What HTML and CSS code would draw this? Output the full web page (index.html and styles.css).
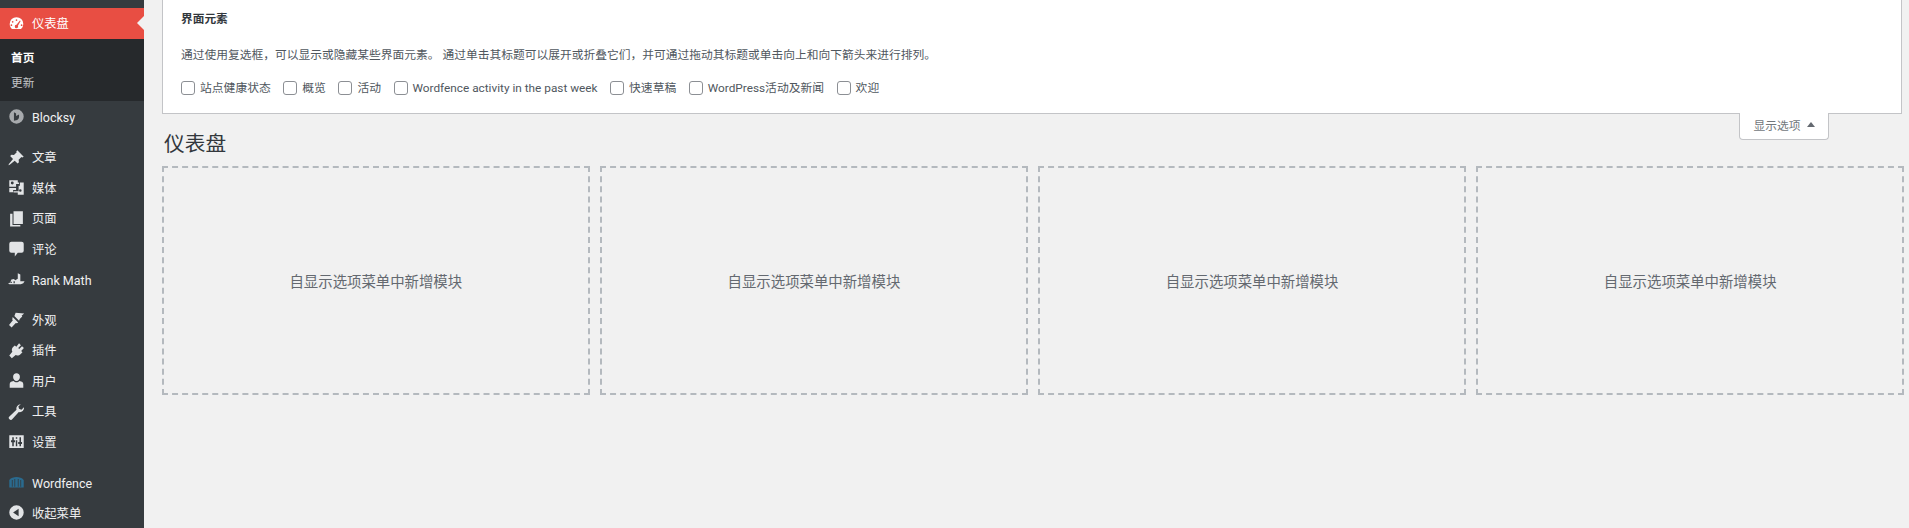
FILE: index.html
```html
<!DOCTYPE html>
<html lang="zh-CN">
<head>
  <meta charset="UTF-8" />
  <meta name="viewport" content="width=device-width, initial-scale=1.0" />
  <title>仪表盘</title>
  <link rel="stylesheet" href="styles.css">
</head>
<body>
  <!-- Admin menu -->
  <nav class="sidebar">
    <a class="menu-item active">
      <svg class="icon" viewBox="0 0 20 20"><path d="M10 2.500a8 8 0 0 0-8 8c0 2.400 1 4.600 2.700 6h10.600a8 8 0 0 0 2.700-6 8 8 0 0 0-8-8zM10 5a1 1 0 1 1 0 2 1 1 0 0 1 0-2zM5.500 7a1 1 0 1 1 0 2 1 1 0 0 1 0-2zM4 11a1 1 0 1 1 0 2 1 1 0 0 1 0-2zM16 11a1 1 0 1 1 0 2 1 1 0 0 1 0-2zM14 6.600l.900.600-3.200 5.300a2 2 0 1 1-1.700-1z" fill-rule="evenodd"/></svg>
      <span>仪表盘</span>
    </a>
    <div class="submenu">
      <a class="sub-item current">首页</a>
      <a class="sub-item">更新</a>
    </div>
    <a class="menu-item first-after-sub">
      <svg class="icon dim" viewBox="0 0 20 20"><path d="M10 1.500a8.500 8.500 0 1 0 0 17 8.500 8.500 0 0 0 0-17zM7 5l2.500 1.500v3L13 7.500v3.200a3.800 3.800 0 0 1-2.200 3.300L7 15z" fill-rule="evenodd"/></svg>
      <span class="latin">Blocksy</span>
    </a>
    <div class="menu-sep"></div>
    <a class="menu-item">
      <svg class="icon" viewBox="0 0 20 20"><path d="M11 1.500l7.500 7.500-1.700.900-1-.600-3.300 3.300.400 2.900-1.600 1.600-3.400-3.400-5.900 4.900-1.400.400.400-1.400 4.900-5.900-3.400-3.400 1.600-1.600 2.900.400 3.300-3.300-.600-1z"/></svg>
      <span>文章</span>
    </a>
    <a class="menu-item">
      <svg class="icon" viewBox="0 0 20 20"><path d="M1.500 1.500h10v2.500h1.500v2H9.500v3h-8zM5 3a1.700 1.700 0 1 0 0 3.400A1.700 1.700 0 0 0 5 3zM1.500 10.500h8V13H6v2.500H1.500zM14 4h4.500v14.500h-7V16h-5v-1.500h6V8H14zM14.500 12a1.500 1.500 0 1 0 0 3 1.500 1.500 0 0 0 0-3z" fill-rule="evenodd"/></svg>
      <span>媒体</span>
    </a>
    <a class="menu-item">
      <svg class="icon" viewBox="0 0 20 20"><path d="M6.500 1.500h11v15h-11zM2.500 4.500h2.800v13.200h9.200v1.800h-12z"/></svg>
      <span>页面</span>
    </a>
    <a class="menu-item">
      <svg class="icon" viewBox="0 0 20 20"><path d="M4 2h12a2.500 2.500 0 0 1 2.500 2.500v8A2.500 2.500 0 0 1 16 15h-4.500L8 19.500V15H4a2.500 2.500 0 0 1-2.500-2.500v-8A2.500 2.500 0 0 1 4 2z"/></svg>
      <span>评论</span>
    </a>
    <a class="menu-item">
      <svg class="icon" viewBox="0 0 20 20"><path d="M11.500 2.500l3 1.500v8h5l-1.500 2.500-3 1H2L0 15l2.500-1.500L4 10l3-.500L8.500 11l3-2zM3 12.500h1.500V14H3zM6.500 12h1.500v2.500H6.500z" fill-rule="evenodd"/></svg>
      <span class="latin">Rank Math</span>
    </a>
    <div class="menu-sep"></div>
    <a class="menu-item">
      <svg class="icon" viewBox="0 0 20 20"><path d="M9 2l10 1-3 2.500.800 1-3 3-.800 2-5.500-5.500zM5.500 7l6.500 6.500-1.500 1-1.300-.500-5 5.500-3-3 4.500-5.700L5 10z"/></svg>
      <span>外观</span>
    </a>
    <a class="menu-item">
      <svg class="icon" viewBox="0 0 20 20"><path d="M13 1.500l2.200 2.200-3.200 3.300 1.200 1.200 3.300-3.200 2.200 2.200-3.200 3.300 1.500 1.500-2 2c-2 2-4.500 2.200-6 1.200L4.500 19 1.500 16l3.600-4.500C4 10 4.500 7.500 6 6l2-2L9.800 5.700z"/></svg>
      <span>插件</span>
    </a>
    <a class="menu-item">
      <svg class="icon" viewBox="0 0 20 20"><path d="M10 1.500a4 4 0 0 1 4 4.300c0 2.700-1.800 4.700-4 4.700S6 8.500 6 5.800a4 4 0 0 1 4-4.300zM6.500 10.500c1 1 2.200 1.700 3.500 1.700s2.500-.700 3.500-1.700c3 .500 4.500 1.700 4.500 3.800v4.200H2v-4.200c0-2.100 1.500-3.300 4.500-3.800z"/></svg>
      <span>用户</span>
    </a>
    <a class="menu-item">
      <svg class="icon" viewBox="0 0 20 20"><path d="M15 1.500a5 5 0 0 0-5 6.300L2 15.500a2.300 2.300 0 1 0 3.200 3.200l7.500-8A5 5 0 0 0 18.800 5l-3 2.800-2.800-1-.800-2.800 2.800-2.500z"/></svg>
      <span>工具</span>
    </a>
    <a class="menu-item">
      <svg class="icon" viewBox="0 0 20 20"><path d="M1.500 2.500h17v15h-17zM5 5v3.500H3.500V11H5v4.500h1.800V11h1.500V8.500H6.800V5zM13.500 5v5.500H12V13h1.500v2.500h1.800V13h1.200v-2.500h-1.200V5zM9.200 5v1.800h1.700V5zM9.200 8.500v7h1.700v-7z" fill-rule="evenodd"/></svg>
      <span>设置</span>
    </a>
    <div class="menu-sep"></div>
    <a class="menu-item">
      <svg class="icon wf" viewBox="0 0 20 20"><path d="M1.500 7c2-2.500 5.300-3.500 8.500-3.500s6.500 1 8.500 3.500v9h-17zM4.500 7v8h1V7zM7.500 6v9h1V6zM11.500 6v9h1V6zM14.500 7v8h1V7z" fill-rule="evenodd"/></svg>
      <span class="latin">Wordfence</span>
    </a>
    <a class="menu-item">
      <svg class="icon" viewBox="0 0 20 20"><path d="M10 1.500a8.500 8.500 0 1 0 0 17 8.500 8.500 0 0 0 0-17zM12.500 5.500v9L6 10z" fill-rule="evenodd"/></svg>
      <span>收起菜单</span>
    </a>
  </nav>

  <main class="content">
    <!-- Screen options panel -->
    <section class="screen-options">
      <h5 class="options-title">界面元素</h5>
      <p class="options-desc">通过使用复选框，可以显示或隐藏某些界面元素。 通过单击其标题可以展开或折叠它们，并可通过拖动其标题或单击向上和向下箭头来进行排列。</p>
      <div class="options-checks">
        <label><input type="checkbox">站点健康状态</label>
        <label><input type="checkbox">概览</label>
        <label><input type="checkbox">活动</label>
        <label><input type="checkbox">Wordfence activity in the past week</label>
        <label><input type="checkbox">快速草稿</label>
        <label><input type="checkbox">WordPress活动及新闻</label>
        <label><input type="checkbox">欢迎</label>
      </div>
    </section>
    <button class="options-tab">显示选项<i class="arrow"></i></button>

    <h1 class="page-title">仪表盘</h1>

    <div class="dash-grid">
      <div class="drop-box">自显示选项菜单中新增模块</div>
      <div class="drop-box">自显示选项菜单中新增模块</div>
      <div class="drop-box">自显示选项菜单中新增模块</div>
      <div class="drop-box">自显示选项菜单中新增模块</div>
    </div>
  </main>
</body>
</html>
```

FILE: styles.css
```css
* {
  margin: 0;
  padding: 0;
  box-sizing: border-box;
}
html, body {
  height: 528px;
  overflow: hidden;
}
body {
  display: flex;
  background: #f1f1f1;
  color: #50575e;
  font-family: Roboto, "Noto Sans CJK SC", sans-serif;
  font-size: 11.75px;
}

/* Admin menu */
.sidebar {
  width: 144px;
  flex-shrink: 0;
  padding-top: 8px;
  background: #363b3f;
  color: #fff;
}
.menu-item {
  display: flex;
  align-items: center;
  height: 30.5px;
  padding-left: 7.5px;
  gap: 7.5px;
  font-size: 12.3px;
  color: #f0f0f1;
}
.menu-item .latin {
  padding-top: 2px;
  font-size: 12.5px;
}
.icon {
  width: 17px;
  height: 17px;
  fill: #e2e4e6;
  flex-shrink: 0;
}
.icon.dim { fill: #a7aaad; }
.icon.wf { fill: #2a6a8e; }
.menu-item.active {
  position: relative;
  background: #e84e43;
  color: #fff;
}
.menu-item.active .icon { fill: #fff; }
.menu-item.active::after {
  content: "";
  position: absolute;
  right: 0;
  top: 8px;
  border: 7px solid transparent;
  border-right-color: #f1f1f1;
  border-left-width: 0;
}
.submenu {
  background: #26292c;
  padding: 5px 0 6px;
}
.sub-item {
  display: flex;
  align-items: center;
  height: 25.5px;
  padding-left: 11px;
  font-size: 11.7px;
  color: #c3c4c7;
}
.sub-item.current {
  color: #fff;
  font-weight: 700;
}
.first-after-sub { margin-top: 1px; }
.menu-sep { height: 10px; }

/* Main column */
.content {
  flex: 1;
  min-width: 0;
  padding: 0 5px 0 18px;
}
.screen-options {
  height: 114px;
  margin-right: 2px;
  padding: 0 18px;
  background: #fff;
  border: 1px solid #c3c4c7;
  border-top: 0;
}
.options-title {
  padding-top: 10px;
  line-height: 18px;
  font-size: 11.7px;
  font-weight: 600;
  color: #32373c;
}
.options-desc {
  margin-top: 18px;
  line-height: 18px;
}
.options-checks {
  display: flex;
  gap: 12.5px;
  margin-top: 15px;
  line-height: 18px;
  font-size: 11.8px;
}
.options-checks label {
  display: flex;
  align-items: center;
  gap: 5px;
}
.options-checks input {
  appearance: none;
  width: 14px;
  height: 14px;
  background: #fff;
  border: 1px solid #8c8f94;
  border-radius: 3px;
}
.options-tab {
  float: right;
  display: flex;
  align-items: center;
  justify-content: center;
  gap: 6px;
  width: 90px;
  height: 27px;
  margin: -1px 75px 0 0;
  padding-bottom: 3px;
  position: relative;
  background: #fff;
  border: 1px solid #c3c4c7;
  border-top: 0;
  border-radius: 0 0 4px 4px;
  color: #72777c;
  font: inherit;
}
.arrow {
  border: 4px solid transparent;
  border-bottom: 5px solid #646970;
  border-top-width: 0;
}
.page-title {
  padding: 16px 0 0 2px;
  line-height: 29px;
  font-size: 20.7px;
  font-weight: 400;
  color: #32373c;
}
.dash-grid {
  display: grid;
  grid-template-columns: repeat(4, 1fr);
  gap: 10.5px;
  margin-top: 7px;
}
.drop-box {
  display: flex;
  align-items: center;
  justify-content: center;
  height: 229px;
  border: 2px dashed #b4b9be;
  font-size: 14.4px;
  color: #646970;
}
```
